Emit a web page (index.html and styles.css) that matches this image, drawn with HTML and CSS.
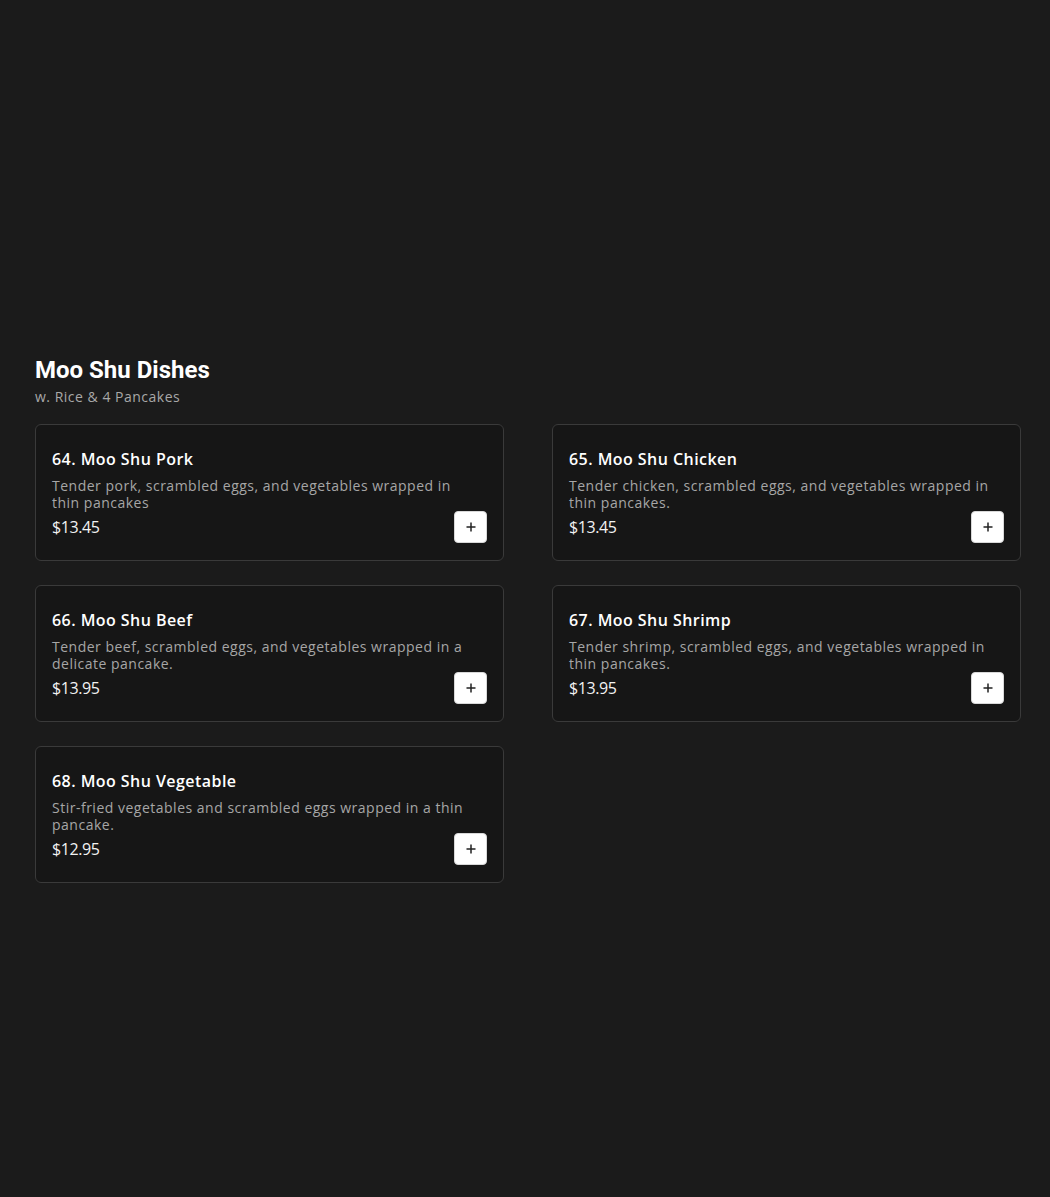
FILE: index.html
```html
<!DOCTYPE html>
<html lang="en">
<head>
<meta charset="utf-8">
<title>Moo Shu Dishes</title>
<link rel="stylesheet" href="styles.css">
</head>
<body>
<main class="page">
  <section class="category">
    <h2 class="category-title">Moo Shu Dishes</h2>
    <p class="category-sub">w. Rice &amp; 4 Pancakes</p>
    <div class="grid">
      <article class="card">
        <h3 class="item-name">64. Moo Shu Pork</h3>
        <p class="item-desc">Tender pork, scrambled eggs, and vegetables wrapped in thin pancakes</p>
        <div class="item-foot">
          <span class="price">$13.45</span>
          <button class="add" aria-label="Add"><svg viewBox="0 0 12 12" width="12" height="12"><path d="M6 1.5v9M1.5 6h9" stroke="#222" stroke-width="1.5" fill="none"/></svg></button>
        </div>
      </article>
      <article class="card">
        <h3 class="item-name">65. Moo Shu Chicken</h3>
        <p class="item-desc">Tender chicken, scrambled eggs, and vegetables wrapped in thin pancakes.</p>
        <div class="item-foot">
          <span class="price">$13.45</span>
          <button class="add" aria-label="Add"><svg viewBox="0 0 12 12" width="12" height="12"><path d="M6 1.5v9M1.5 6h9" stroke="#222" stroke-width="1.5" fill="none"/></svg></button>
        </div>
      </article>
      <article class="card">
        <h3 class="item-name">66. Moo Shu Beef</h3>
        <p class="item-desc">Tender beef, scrambled eggs, and vegetables wrapped in a delicate pancake.</p>
        <div class="item-foot">
          <span class="price">$13.95</span>
          <button class="add" aria-label="Add"><svg viewBox="0 0 12 12" width="12" height="12"><path d="M6 1.5v9M1.5 6h9" stroke="#222" stroke-width="1.5" fill="none"/></svg></button>
        </div>
      </article>
      <article class="card">
        <h3 class="item-name">67. Moo Shu Shrimp</h3>
        <p class="item-desc">Tender shrimp, scrambled eggs, and vegetables wrapped in thin pancakes.</p>
        <div class="item-foot">
          <span class="price">$13.95</span>
          <button class="add" aria-label="Add"><svg viewBox="0 0 12 12" width="12" height="12"><path d="M6 1.5v9M1.5 6h9" stroke="#222" stroke-width="1.5" fill="none"/></svg></button>
        </div>
      </article>
      <article class="card">
        <h3 class="item-name">68. Moo Shu Vegetable</h3>
        <p class="item-desc">Stir-fried vegetables and scrambled eggs wrapped in a thin pancake.</p>
        <div class="item-foot">
          <span class="price">$12.95</span>
          <button class="add" aria-label="Add"><svg viewBox="0 0 12 12" width="12" height="12"><path d="M6 1.5v9M1.5 6h9" stroke="#222" stroke-width="1.5" fill="none"/></svg></button>
        </div>
      </article>
    </div>
  </section>
</main>
</body>
</html>
```
FILE: styles.css
```css
* { box-sizing: border-box; }
html, body { margin: 0; padding: 0; }
body {
  background: #1b1b1b;
  color: #f2f2f2;
  font-family: "Open Sans", "Liberation Sans", sans-serif;
  min-height: 1197px;
}
.page {
  padding: 354px 29px 0 35px;
}
.category-title {
  margin: 0;
  font-family: Roboto, "Liberation Sans", sans-serif;
  font-weight: 700;
  font-size: 24px;
  line-height: 32px;
  color: #ffffff;
}
.category-sub {
  margin: 1px 0 0;
  font-size: 14px;
  line-height: 20px;
  letter-spacing: 0.5px;
  color: #a8a8a8;
}
.grid {
  margin-top: 17px;
  display: grid;
  grid-template-columns: 469px 469px;
  column-gap: 48px;
  row-gap: 24px;
}
.card {
  background: #161616;
  border: 1px solid #3a3a3a;
  border-radius: 6px;
  padding: 22px 16px 17px;
  display: flex;
  flex-direction: column;
}
.item-name {
  margin: 0 0 6px;
  font-size: 16px;
  line-height: 24px;
  font-weight: 600;
  letter-spacing: 0.45px;
  color: #ffffff;
}
.item-desc {
  margin: 0;
  font-size: 14px;
  line-height: 17px;
  letter-spacing: 0.5px;
  color: #a6a6a6;
  max-width: 428px;
}
.item-foot {
  display: flex;
  align-items: center;
  justify-content: space-between;
  height: 32px;
}
.price {
  font-size: 16px;
  letter-spacing: -0.4px;
  color: #f2f2f2;
}
.add {
  width: 33px;
  height: 32px;
  padding: 0;
  border: 1px solid #d8d8d8;
  border-radius: 4px;
  background: #ffffff;
  display: flex;
  align-items: center;
  justify-content: center;
  cursor: pointer;
}
.add svg { display: block; }
```
